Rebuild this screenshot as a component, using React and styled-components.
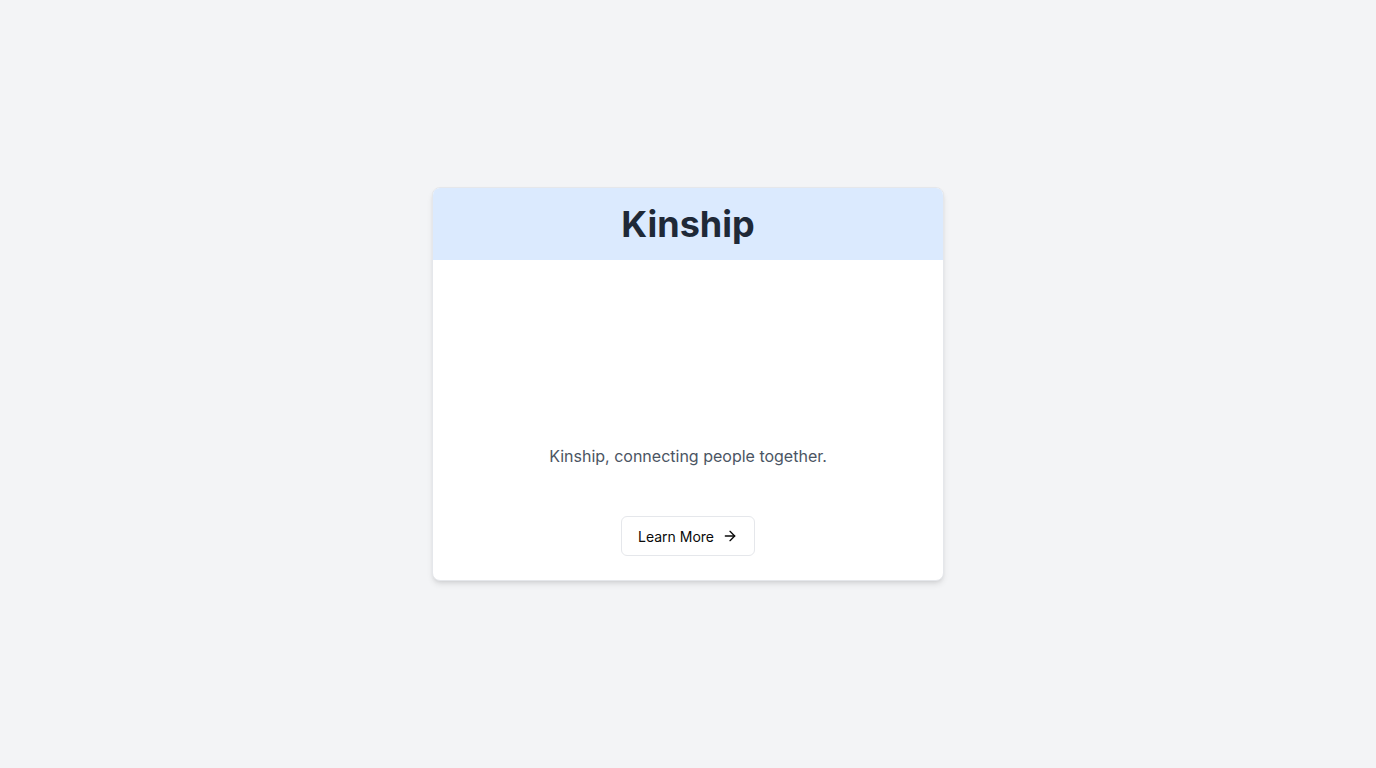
import React from "react";
import styled, { createGlobalStyle } from "styled-components";
import { ArrowRight } from "lucide-react";

const Global = createGlobalStyle`
  html, body { margin: 0; padding: 0; }
  body {
    background: #f3f4f6;
    font-family: Inter, "Noto Sans", sans-serif;
    -webkit-font-smoothing: antialiased;
  }
  * { box-sizing: border-box; }
`;

const Page = styled.main`
  min-height: 100vh;
  display: flex;
  align-items: center;
  justify-content: center;
`;

const Card = styled.section`
  width: 512px;
  background: #ffffff;
  border: 1px solid #e5e7eb;
  border-radius: 8px;
  overflow: hidden;
  box-shadow: 0 4px 6px -1px rgba(0, 0, 0, 0.1), 0 2px 4px -2px rgba(0, 0, 0, 0.1);
`;

const Header = styled.header`
  background: #dbeafe;
  padding: 16px 24px;
  text-align: center;
`;

const Title = styled.h1`
  margin: 0;
  font-size: 36px;
  line-height: 40px;
  font-weight: 700;
  color: #1f2937;
`;

const Body = styled.div`
  padding: 24px;
  display: flex;
  flex-direction: column;
  align-items: center;
`;

const Media = styled.div`
  height: 160px;
  width: 100%;
`;

const Tagline = styled.p`
  margin: 0 0 48px;
  font-size: 16px;
  line-height: 24px;
  color: #4b5563;
  text-align: center;
`;

const Button = styled.button`
  display: inline-flex;
  align-items: center;
  gap: 8px;
  height: 40px;
  padding: 0 16px;
  background: #ffffff;
  border: 1px solid #e5e7eb;
  border-radius: 6px;
  font-family: inherit;
  font-size: 14px;
  font-weight: 400;
  color: #0a0a0a;
  cursor: pointer;
`;

export default function App() {
  return (
    <>
      <Global />
      <Page>
        <Card>
          <Header>
            <Title>Kinship</Title>
          </Header>
          <Body>
            <Media />
            <Tagline>Kinship, connecting people together.</Tagline>
            <Button>
              Learn More
              <ArrowRight size={16} strokeWidth={2} />
            </Button>
          </Body>
        </Card>
      </Page>
    </>
  );
}
